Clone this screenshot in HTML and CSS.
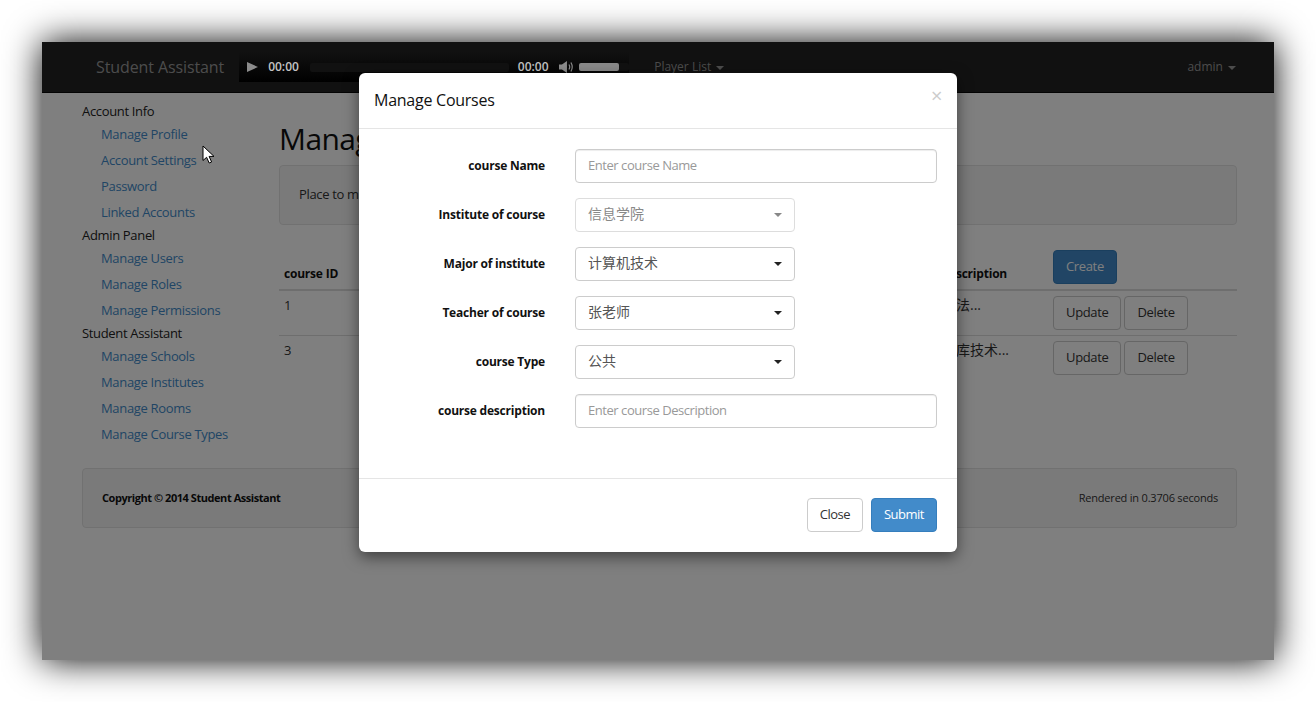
FILE: index.html
```html
<!DOCTYPE html>
<html lang="en">
<head>
    <meta charset="UTF-8">
    <meta name="viewport" content="width=device-width, initial-scale=1.0">
    <title>Student Assistant</title>
    <link rel="stylesheet" href="styles.css">
</head>
<body>
    <div class="window">
        <nav class="navbar">
            <a class="brand">Student Assistant</a>
            <div class="player">
                <svg class="play-icon" width="11" height="10" viewBox="0 0 11 10"><path d="M0 0L11 5L0 10Z" fill="#8c8c8c"/></svg>
                <span class="time">00:00</span>
                <span class="track"></span>
                <span class="time">00:00</span>
                <svg class="speaker" width="15" height="14" viewBox="0 0 15 14">
                    <path d="M0 4.5H3L8 1V13L3 9.5H0Z" fill="#8c8c8c"/>
                    <path d="M10 4.5Q11.5 7 10 9.5M12 2.5Q14.6 7 12 11.5" fill="none" stroke="#8c8c8c" stroke-width="1.2"/>
                </svg>
                <span class="volume"><span class="volume-fill"></span></span>
            </div>
            <a class="nav-link">Player List <span class="caret"></span></a>
            <a class="nav-link nav-right">admin <span class="caret"></span></a>
        </nav>

        <div class="layout">
            <aside class="sidebar">
                <div class="side-title">Account Info</div>
                <a class="side-link">Manage Profile</a>
                <a class="side-link">Account Settings</a>
                <a class="side-link">Password</a>
                <a class="side-link">Linked Accounts</a>
                <div class="side-title">Admin Panel</div>
                <a class="side-link">Manage Users</a>
                <a class="side-link">Manage Roles</a>
                <a class="side-link">Manage Permissions</a>
                <div class="side-title">Student Assistant</div>
                <a class="side-link">Manage Schools</a>
                <a class="side-link">Manage Institutes</a>
                <a class="side-link">Manage Rooms</a>
                <a class="side-link">Manage Course Types</a>
            </aside>
            <main class="main">
                <h1 class="page-title">Manage Courses</h1>
                <div class="well">Place to manage courses</div>
                <table class="course-table">
                    <thead>
                        <tr>
                            <th class="col-id">course ID</th>
                            <th class="col-desc">course description</th>
                            <th class="actions"><button class="btn btn-primary">Create</button></th>
                        </tr>
                    </thead>
                    <tbody>
                        <tr>
                            <td>1</td>
                            <td class="cell-cjk">计算机算法...</td>
                            <td class="actions"><button class="btn btn-outline">Update</button><button class="btn btn-outline">Delete</button></td>
                        </tr>
                        <tr>
                            <td>3</td>
                            <td class="cell-cjk">大型数据库技术...</td>
                            <td class="actions"><button class="btn btn-outline">Update</button><button class="btn btn-outline">Delete</button></td>
                        </tr>
                    </tbody>
                </table>
            </main>
        </div>

        <footer class="footer">
            <span class="copyright">Copyright © 2014 Student Assistant</span>
            <span class="rendered">Rendered in 0.3706 seconds</span>
        </footer>

        <div class="backdrop"></div>

        <svg class="cursor" width="14" height="19" viewBox="0 0 14 19">
            <path d="M1 1V15.5L4.6 12.3L7.2 18L9.6 17L7.1 11.4H12Z" fill="#fff" stroke="#000" stroke-width="1"/>
        </svg>

        <div class="modal">
            <div class="modal-header">
                <h4 class="modal-title">Manage Courses</h4>
                <span class="close">×</span>
            </div>
            <form class="modal-body">
                <div class="form-row">
                    <label class="form-label">course Name</label>
                    <input class="form-input" type="text" placeholder="Enter course Name">
                </div>
                <div class="form-row">
                    <label class="form-label">Institute of course</label>
                    <div class="select select-disabled"><span class="select-text">信息学院</span><span class="caret"></span></div>
                </div>
                <div class="form-row">
                    <label class="form-label">Major of institute</label>
                    <div class="select"><span class="select-text">计算机技术</span><span class="caret"></span></div>
                </div>
                <div class="form-row">
                    <label class="form-label">Teacher of course</label>
                    <div class="select"><span class="select-text">张老师</span><span class="caret"></span></div>
                </div>
                <div class="form-row">
                    <label class="form-label">course Type</label>
                    <div class="select"><span class="select-text">公共</span><span class="caret"></span></div>
                </div>
                <div class="form-row">
                    <label class="form-label">course description</label>
                    <input class="form-input" type="text" placeholder="Enter course Description">
                </div>
            </form>
            <div class="modal-footer">
                <button class="btn btn-default">Close</button>
                <button class="btn btn-primary">Submit</button>
            </div>
        </div>
    </div>
</body>
</html>
```

FILE: styles.css
```css
html, body {
    margin: 0;
    height: 702px;
    overflow: hidden;
}
body {
    box-sizing: border-box;
    padding: 42px 42px 42px;
    background-color: #fff;
    font-family: "Open Sans", "Noto Sans CJK SC", sans-serif;
    font-size: 13px;
    line-height: 20px;
    letter-spacing: -0.33px;
    color: #333;
}
.window {
    position: relative;
    height: 618px;
    background-color: #fff;
    box-shadow: 0 0 34px #000;
}

/* navbar */
.navbar {
    display: flex;
    align-items: center;
    height: 50px;
    padding: 0 38px 0 54px;
    background-color: #222;
    border-bottom: 1px solid #080808;
    letter-spacing: 0;
}
.brand {
    font-size: 16px;
    letter-spacing: -0.1px;
    color: #999;
    margin-right: 15px;
}
.nav-link {
    font-size: 12px;
    color: #999;
    margin-left: 25px;
}
.nav-right {
    margin-left: auto;
}
.caret {
    display: inline-block;
    width: 0;
    height: 0;
    margin-left: 2px;
    vertical-align: middle;
    border-top: 4px solid;
    border-right: 4px solid transparent;
    border-left: 4px solid transparent;
}

/* audio player sits above the backdrop */
.player {
    position: relative;
    z-index: 2;
    display: flex;
    align-items: center;
    box-sizing: border-box;
    width: 390px;
    height: 30px;
    padding-left: 8px;
    background: linear-gradient(#111, #000);
}
.play-icon {
    margin-right: 10px;
}
.time {
    font-size: 12px;
    font-weight: 600;
    color: #c4c4c4;
}
.track {
    width: 200px;
    height: 9px;
    margin: 0 9px 0 11px;
    background-color: #111;
    border-radius: 2px;
}
.speaker {
    margin: 0 6px 0 10px;
}
.volume {
    width: 50px;
    height: 8px;
    background-color: #111;
    border-radius: 2px;
}
.volume-fill {
    display: block;
    width: 40px;
    height: 8px;
    background-color: #8a8a8a;
    border-radius: 2px;
}

/* page */
.layout {
    display: flex;
    padding: 8px 37px 0 40px;
}
.sidebar {
    width: 197px;
    flex-shrink: 0;
}
.side-title {
    color: #222;
}
.side-link {
    display: block;
    padding: 3px 0 3px 19px;
    color: #428bca;
}
.main {
    flex: 1;
}
.page-title {
    margin: 20px 0 8px;
    font-size: 30px;
    font-weight: 400;
    line-height: 36px;
    letter-spacing: -0.6px;
    color: #111;
}
.well {
    box-sizing: border-box;
    height: 60px;
    padding: 18px 19px 20px;
    margin-bottom: 20px;
    background-color: #f5f5f5;
    border: 1px solid #e3e3e3;
    border-radius: 4px;
}
.course-table {
    width: 100%;
    border-spacing: 0;
}
.course-table th {
    padding: 5px;
    text-align: left;
    vertical-align: bottom;
    font-size: 12px;
    letter-spacing: -0.21px;
    color: #111;
    border-bottom: 2px solid #ddd;
}
.course-table td {
    padding: 4px 5px 6px;
    vertical-align: top;
    border-bottom: 1px solid #ddd;
}
.course-table tbody tr:last-child td {
    border-bottom: none;
}
.col-id {
    width: 606px;
}
.col-desc {
    width: 143px;
}
.course-table .actions {
    padding: 5px;
}
.actions .btn + .btn {
    margin-left: 3px;
}
.cell-cjk {
    font-size: 14px;
    letter-spacing: 0;
}
.footer {
    display: flex;
    justify-content: space-between;
    box-sizing: border-box;
    height: 60px;
    margin: 21px 37px 0 40px;
    padding: 19px 18px 19px 19px;
    font-size: 11px;
    letter-spacing: -0.2px;
    background-color: #f5f5f5;
    border: 1px solid #e3e3e3;
    border-radius: 4px;
}
.copyright {
    font-weight: 700;
    letter-spacing: -0.45px;
    color: #111;
}

/* buttons */
.btn {
    box-sizing: border-box;
    height: 34px;
    padding: 0 12px 2px;
    font-family: inherit;
    font-size: 13px;
    letter-spacing: -0.35px;
    border: 1px solid transparent;
    border-radius: 4px;
}
.btn-default, .btn-outline {
    color: #333;
    background-color: #fff;
    border-color: #ccc;
}
.btn-outline {
    background-color: transparent;
}
.btn-primary {
    color: #fff;
    background-color: #428bca;
    border-color: #357ebd;
}

/* overlay */
.backdrop {
    position: absolute;
    inset: 0;
    z-index: 1;
    background-color: rgba(0, 0, 0, 0.5);
}
.cursor {
    position: absolute;
    left: 160px;
    top: 103px;
    z-index: 2;
}
.modal {
    position: absolute;
    left: 317px;
    top: 31px;
    z-index: 3;
    width: 598px;
    background-color: #fff;
    border-radius: 6px;
    box-shadow: 0 5px 15px rgba(0, 0, 0, 0.5);
}
.modal-header {
    position: relative;
    height: 55px;
    border-bottom: 1px solid #e5e5e5;
}
.modal-title {
    margin: 0;
    padding: 17px 15px 0;
    font-size: 16px;
    font-weight: 400;
    line-height: 20px;
    letter-spacing: -0.25px;
    color: #111;
}
.close {
    position: absolute;
    right: 15px;
    top: 13px;
    font-size: 20px;
    color: #ccc;
}
.modal-body {
    padding: 20px 20px 50px 0;
}
.form-row {
    display: flex;
    align-items: center;
    margin-bottom: 15px;
}
.form-row:last-child {
    margin-bottom: 0;
}
.form-label {
    width: 186px;
    margin-right: 30px;
    text-align: right;
    font-size: 12px;
    font-weight: 700;
    letter-spacing: -0.21px;
    color: #111;
}
.form-input {
    box-sizing: border-box;
    flex: 1;
    min-width: 0;
    height: 34px;
    padding: 0 12px 2px;
    font-family: inherit;
    font-size: 13px;
    letter-spacing: -0.45px;
    border: 1px solid #ccc;
    border-radius: 4px;
    box-shadow: inset 0 1px 1px rgba(0, 0, 0, 0.075);
}
.form-input::placeholder {
    color: #999;
}
.select {
    display: flex;
    align-items: center;
    justify-content: space-between;
    box-sizing: border-box;
    width: 220px;
    height: 34px;
    padding: 0 12px;
    color: #555;
    background-color: #fff;
    border: 1px solid #ccc;
    border-radius: 4px;
}
.select-text {
    padding-bottom: 2px;
    font-size: 14px;
    letter-spacing: 0;
}
.select .caret {
    color: #222;
}
.select-disabled {
    color: #888;
    border-color: #ddd;
}
.select-disabled .caret {
    color: #888;
}
.modal-footer {
    display: flex;
    justify-content: flex-end;
    gap: 8px;
    padding: 19px 20px 20px;
    border-top: 1px solid #e5e5e5;
}
.modal-footer .btn {
    letter-spacing: -0.5px;
}
```
